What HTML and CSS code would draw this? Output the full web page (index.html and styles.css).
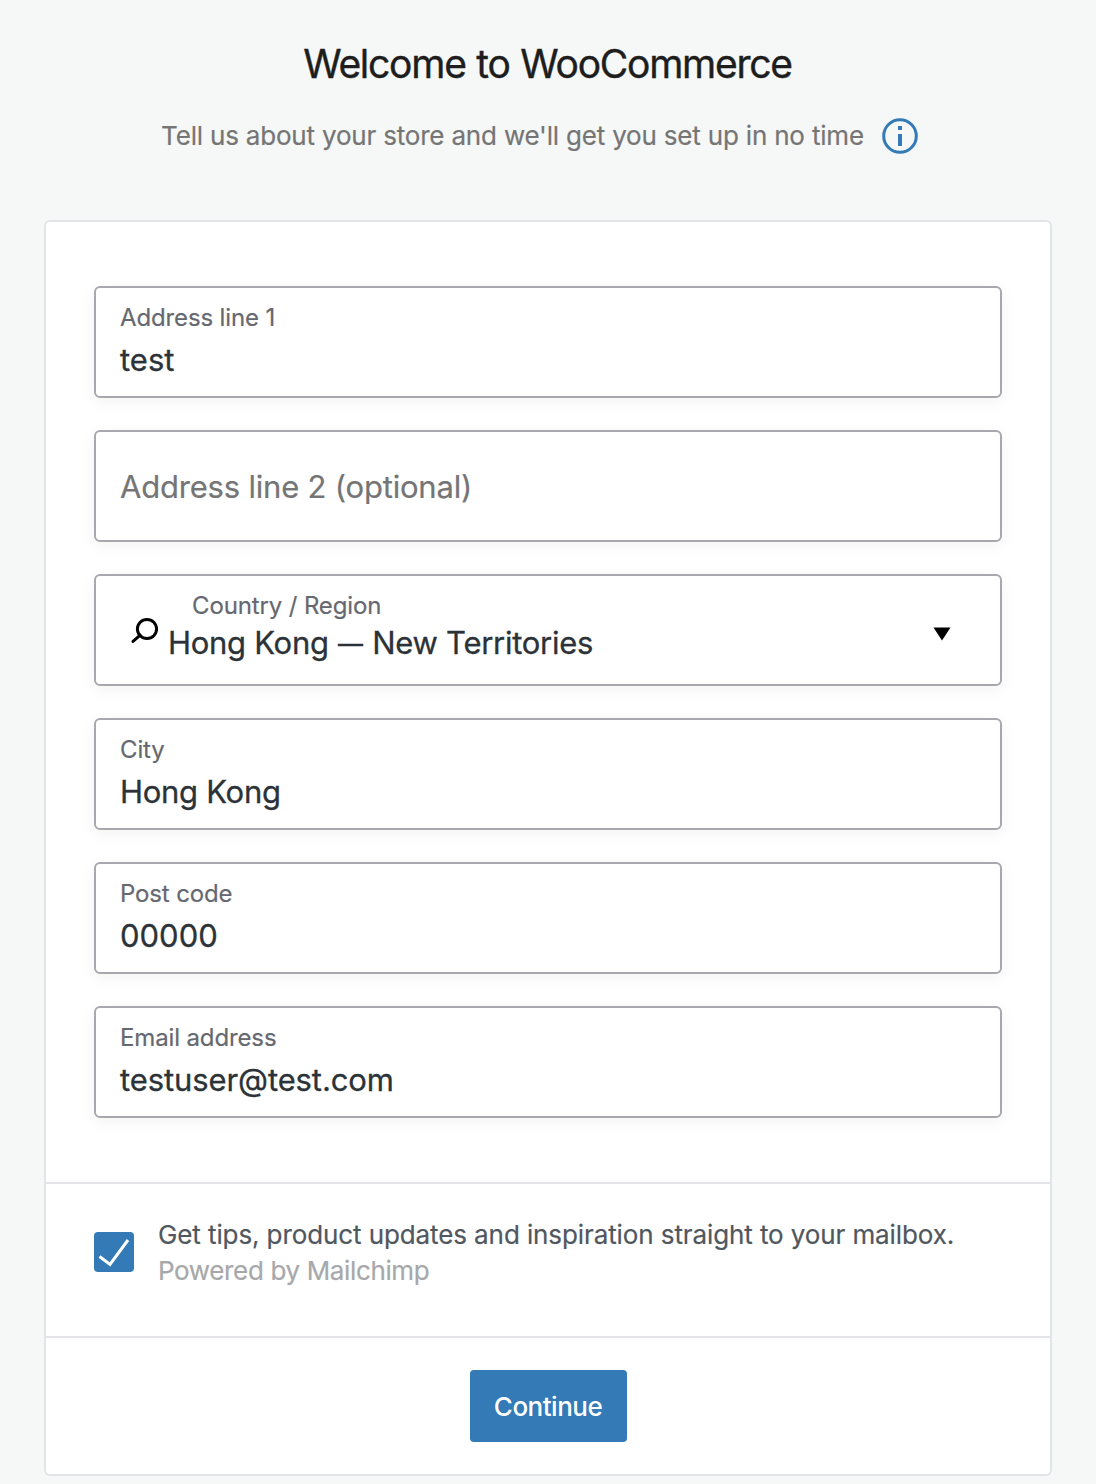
FILE: index.html
```html
<!DOCTYPE html>
<html lang="en">
<head>
<meta charset="utf-8">
<title>Welcome to WooCommerce</title>
<link rel="stylesheet" href="styles.css">
</head>
<body>
<main class="page">
  <header class="intro">
    <h1 class="title">Welcome to WooCommerce</h1>
    <p class="subtitle"><span>Tell us about your store and we'll get you set up in no time</span>
      <svg class="info" viewBox="0 0 36 36" aria-hidden="true"><circle cx="18" cy="18" r="16.3" fill="none" stroke="#337ab7" stroke-width="3"/><path d="M16 8h4v4h-4zM16 16h4v12h-4z" fill="#337ab7"/></svg>
    </p>
  </header>
  <form class="card">
    <div class="fields">
      <div class="field"><label class="label">Address line 1</label><span class="value value-short">test</span></div>
      <div class="field field-empty"><span class="placeholder">Address line 2 (optional)</span></div>
      <div class="field field-select">
        <svg class="search" viewBox="0 0 28 28" aria-hidden="true"><circle cx="17" cy="12" r="9.6" fill="none" stroke="#000" stroke-width="3"/><path d="M10.2 18.2L3 24.4" stroke="#000" stroke-width="3" stroke-linecap="round"/></svg>
        <div class="select-text"><label class="label label-inset">Country / Region</label><span class="value">Hong Kong <span class="dash">—</span> New Territories</span></div>
        <svg class="caret" viewBox="0 0 18 14" aria-hidden="true"><path d="M0.5 0.5h17L9 13.5z"/></svg>
      </div>
      <div class="field"><label class="label">City</label><span class="value">Hong Kong</span></div>
      <div class="field"><label class="label">Post code</label><span class="value value-short">00000</span></div>
      <div class="field"><label class="label">Email address</label><span class="value value-mail">testuser@test.com</span></div>
    </div>
    <div class="newsletter">
      <span class="checkbox"><svg viewBox="0 0 40 40" aria-hidden="true"><path d="M5.5 24.5l10.5 8L34 8" fill="none" stroke="#fff" stroke-width="3"/></svg></span>
      <div class="newsletter-text"><span class="tips">Get tips, product updates and inspiration straight to your mailbox.</span><span class="powered">Powered by Mailchimp</span></div>
    </div>
    <div class="actions"><button class="continue" type="button">Continue</button></div>
  </form>
</main>
</body>
</html>
```
FILE: styles.css
```css
* { box-sizing: border-box; }
body { margin: 0; background: #f6f8f7; font-family: Inter, "Liberation Sans", sans-serif; font-weight: 400; color: #2c3338; }
.page { height: 1484px; padding: 0 44px; overflow: hidden; }
.intro { height: 220px; padding-top: 40px; display: flex; flex-direction: column; align-items: center; }
.title { margin: 0; padding-right: 1px; font-size: 39px; line-height: 48px; font-weight: 400; letter-spacing: -1.25px; word-spacing: 1px; color: #1e1e1e; -webkit-text-stroke: 0.4px #1e1e1e; white-space: nowrap; }
.subtitle { margin: 30px 17px 0 0; display: flex; align-items: center; gap: 18px; font-size: 26px; line-height: 36px; letter-spacing: -0.19px; color: #757575; -webkit-text-stroke: 0.2px #757575; white-space: nowrap; }
.info { width: 36px; height: 36px; }
.card { height: 1256px; background: #fff; border: 2px solid #e2e4e7; border-radius: 6px; }
.fields { padding: 64px 48px; display: flex; flex-direction: column; gap: 32px; }
.field { height: 112px; padding: 15px 24px 0; border: 2px solid #a7a8ad; border-radius: 6px; box-shadow: 0 4px 16px rgba(0,0,0,.05); display: flex; flex-direction: column; align-items: flex-start; white-space: nowrap; }
.label { font-size: 24px; line-height: 30px; letter-spacing: -0.13px; color: #666870; -webkit-text-stroke: 0.2px #666870; }
.value { margin-top: 7px; font-size: 31px; line-height: 40px; letter-spacing: -0.28px; -webkit-text-stroke: 0.3px #2c3338; }
.value-short { letter-spacing: 0; }
.value-mail { letter-spacing: -0.1px; }
.dash { margin: 0 1px; font-size: 25px; line-height: 1; vertical-align: 1px; }
.field-empty { padding-top: 35px; }
.placeholder { font-size: 31px; line-height: 40px; letter-spacing: -0.2px; color: #757575; -webkit-text-stroke: 0.2px #757575; }
.field-select { flex-direction: row; padding: 15px 49px 0 34px; }
.search { width: 28px; height: 28px; margin: 26px 10px 0 0; }
.select-text { flex: 1; display: flex; flex-direction: column; align-items: flex-start; }
.select-text .value { margin-top: 2px; }
.label-inset { margin-left: 24px; }
.caret { width: 18px; height: 14px; margin-top: 36px; }
.newsletter { height: 156px; padding: 33px 48px; display: flex; gap: 24px; border-top: 2px solid #e2e4e7; border-bottom: 2px solid #e2e4e7; font-size: 26px; line-height: 36px; color: #50575e; white-space: nowrap; }
.checkbox { width: 40px; height: 40px; margin-top: 15px; border-radius: 4px; background: #337ab7; }
.newsletter-text { display: flex; flex-direction: column; align-items: flex-start; }
.tips { letter-spacing: -0.1px; -webkit-text-stroke: 0.2px #50575e; }
.powered { color: #a7a8aa; letter-spacing: -0.36px; -webkit-text-stroke: 0.2px #a7a8aa; }
.actions { padding-top: 32px; display: flex; justify-content: center; }
.continue { width: 157px; height: 72px; padding: 2px 0 0; border: 0; border-radius: 4px; background: #337ab7; color: #fff; font: 500 26px/36px Inter, sans-serif; letter-spacing: -0.5px; }
```
